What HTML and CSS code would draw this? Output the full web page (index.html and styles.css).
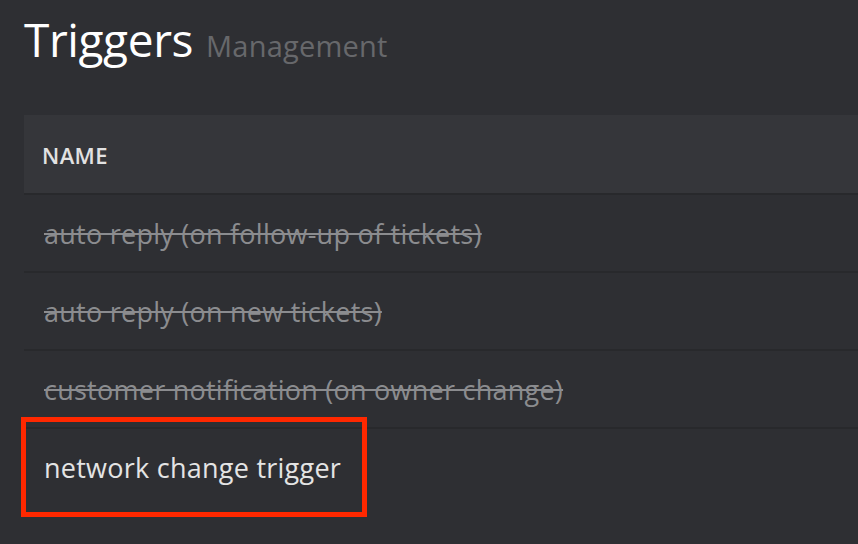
FILE: index.html
```html
<!DOCTYPE html>
<html lang="en">
<head>
<meta charset="utf-8">
<title>Triggers</title>
<link rel="stylesheet" href="styles.css">
</head>
<body>
<div class="page">
  <div class="title">
    <h1 class="title-main">Triggers</h1>
    <span class="title-sub">Management</span>
  </div>
  <div class="table">
    <div class="table-head">
      <div class="head-cell">Name</div>
    </div>
    <div class="row inactive"><span class="cell">auto reply (on follow-up of tickets)</span></div>
    <div class="row inactive"><span class="cell">auto reply (on new tickets)</span></div>
    <div class="row inactive"><span class="cell">customer notification (on owner change)</span></div>
    <div class="row active">
      <span class="cell">network change trigger</span>
      <div class="highlight"></div>
    </div>
  </div>
</div>
</body>
</html>
```
FILE: styles.css
```css
html, body {
  margin: 0;
  padding: 0;
  background: #2e2f33;
}
body {
  font-family: "Open Sans", "Noto Sans", sans-serif;
}
.page {
  padding-left: 24px;
  padding-bottom: 30px;
}
.title {
  display: flex;
  align-items: baseline;
  gap: 13px;
  padding-top: 11px;
}
.title-main {
  margin: 0;
  font-size: 46px;
  line-height: 56px;
  font-weight: 400;
  letter-spacing: -0.4px;
  color: #ffffff;
}
.title-sub {
  font-size: 29px;
  line-height: 40px;
  letter-spacing: 0.2px;
  color: #67686b;
}
.table {
  margin-top: 48px;
}
.table-head {
  height: 78px;
  background: #35363a;
  border-bottom: 2px solid #28292c;
}
.head-cell {
  padding: 22px 0 0 18px;
  font-size: 22px;
  line-height: 36px;
  font-weight: 600;
  letter-spacing: 0.4px;
  text-transform: uppercase;
  color: #e2e2e2;
}
.row {
  position: relative;
  height: 78px;
  border-bottom: 2px solid #28292c;
  padding: 21px 0 0 20px;
  box-sizing: border-box;
}
.row:last-child {
  border-bottom: none;
}
.cell {
  display: block;
  font-size: 27px;
  line-height: 36px;
  letter-spacing: 0.25px;
  white-space: nowrap;
}
.inactive .cell {
  color: #8b8c8f;
  text-decoration: line-through;
  text-decoration-thickness: 2px;
}
.active .cell {
  color: #e4e4e4;
}
.highlight {
  position: absolute;
  top: -12px;
  left: -3px;
  width: 346px;
  height: 100px;
  border: 5px solid #ff2800;
  box-sizing: border-box;
}
```
